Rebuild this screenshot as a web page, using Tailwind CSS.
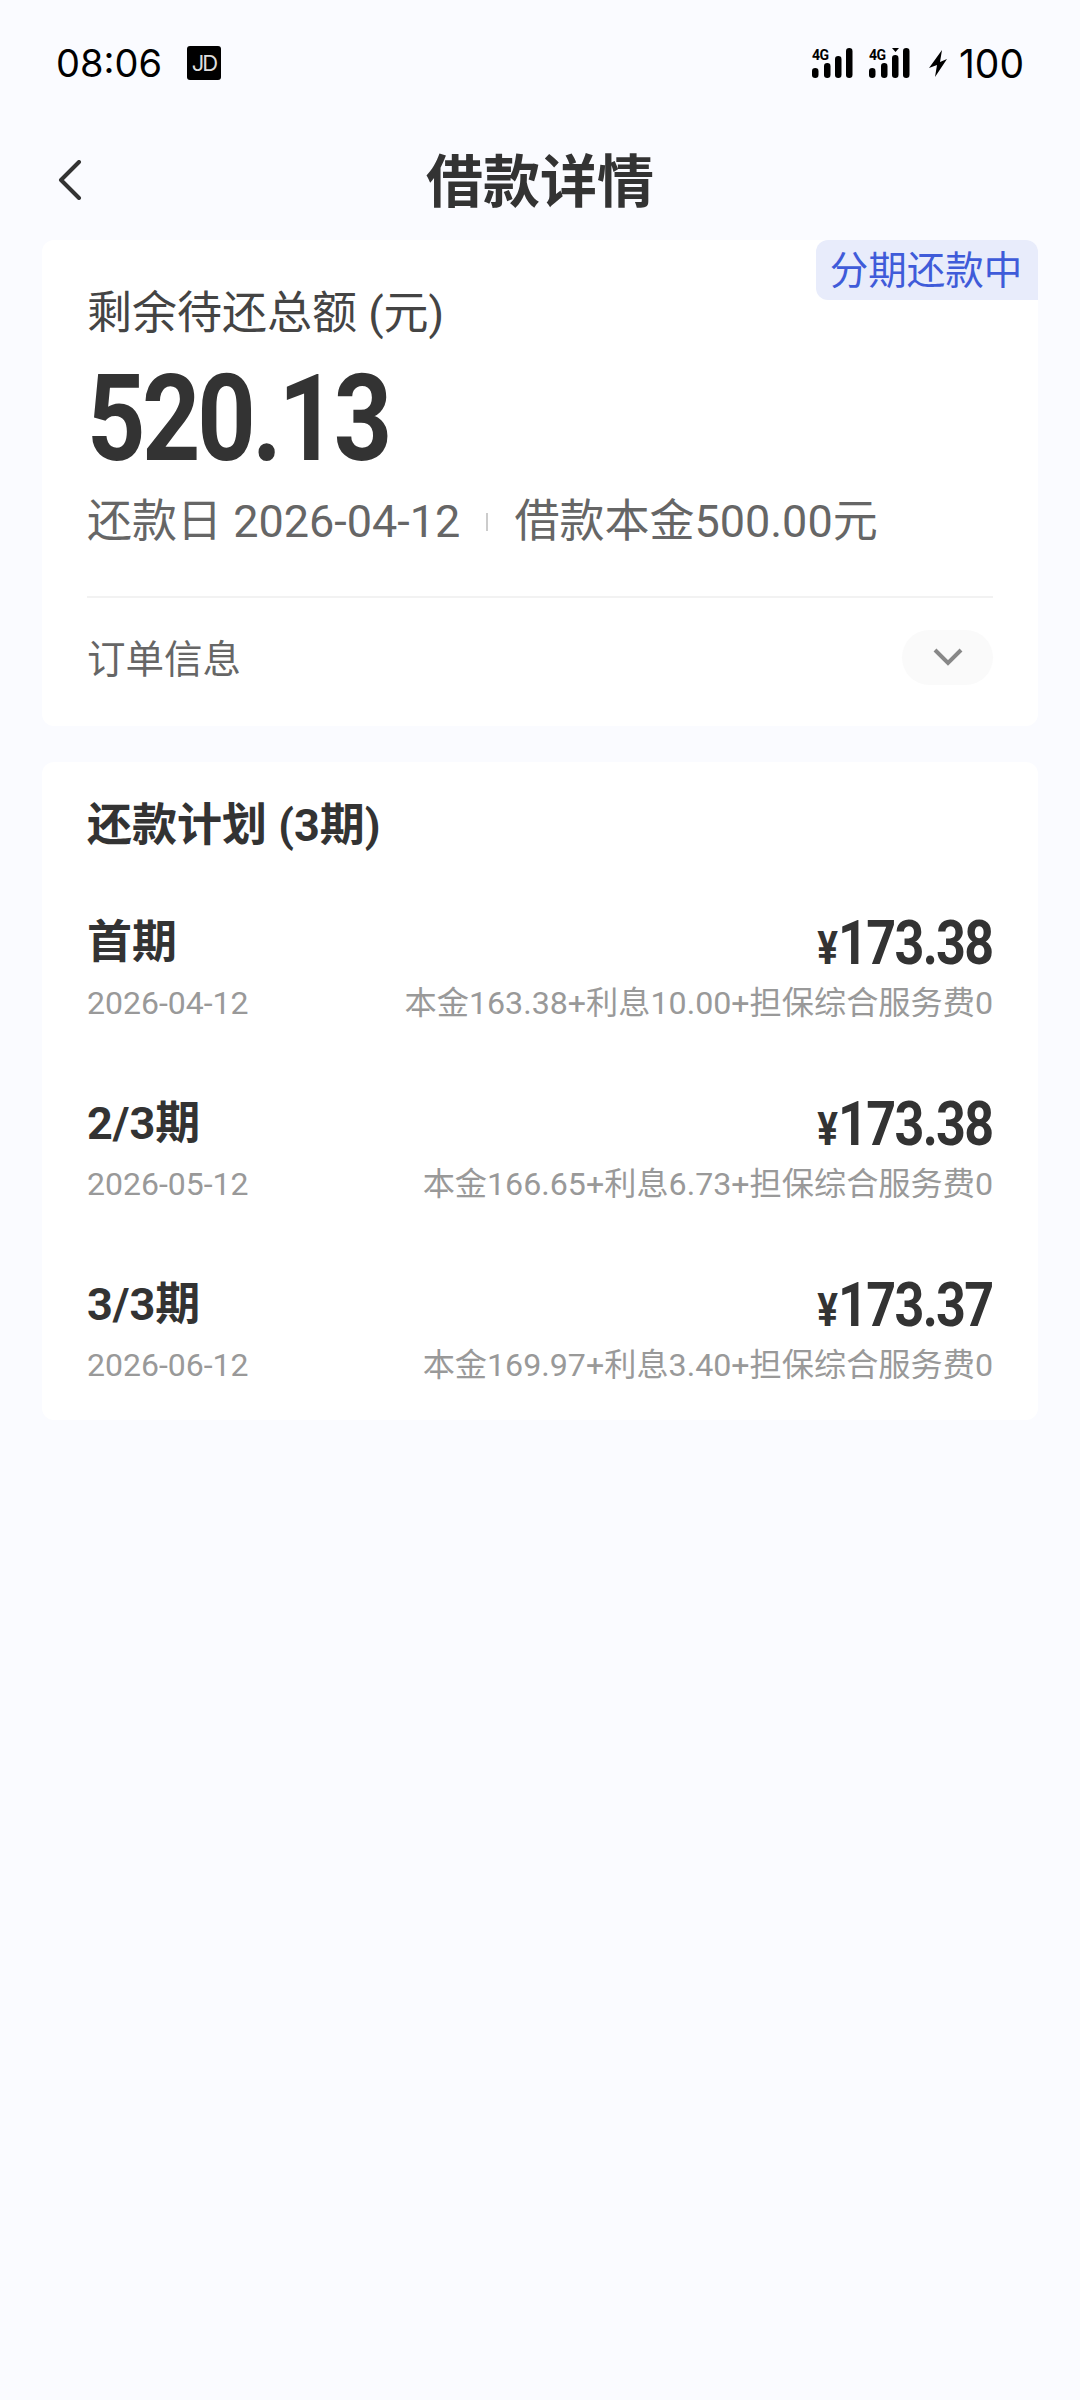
<!DOCTYPE html>
<html lang="zh-CN">
<head>
  <meta charset="UTF-8" />
  <meta name="viewport" content="width=device-width, initial-scale=1.0"/>
  <title>借款详情</title>
  <script src="https://cdn.jsdelivr.net/npm/@tailwindcss/browser@4"></script>
</head>
<body class="bg-[#fafbff] w-[1080px] h-[2400px] overflow-hidden text-[#333] font-['Roboto','Noto_Sans_CJK_SC',sans-serif]">
  <!-- status bar -->
  <div class="h-[126px] pl-[56px] pr-[56px] flex items-center justify-between text-black">
    <div class="flex items-center gap-[25px]">
      <span class="text-[38px] leading-none font-['Inter',sans-serif]">08:06</span>
      <span class="w-[34px] h-[34px] bg-black rounded-[3px] flex items-center justify-center text-[#ddd] text-[22px] leading-none tracking-[-2px] font-['Inter',sans-serif]">JD</span>
    </div>
    <div class="flex items-center">
      <div class="relative w-[41px] h-[31px]">
        <span class="absolute left-0 top-0 text-[14px] leading-[14px] font-bold tracking-[-0.5px]">4G</span>
        <svg width="41" height="31" viewBox="0 0 41 31" class="fill-black">
          <rect x="0" y="20" width="6.5" height="10" rx="3.2"/>
          <rect x="12" y="15" width="6.5" height="15" rx="3.2"/>
          <rect x="23" y="8" width="6.5" height="22" rx="3.2"/>
          <rect x="34" y="0" width="6.5" height="30" rx="3.2"/>
        </svg>
      </div>
      <div class="relative w-[41px] h-[31px] ml-[16px]">
        <span class="absolute left-0 top-0 text-[14px] leading-[14px] font-bold tracking-[-0.5px]">4G</span>
        <svg width="41" height="31" viewBox="0 0 41 31" class="fill-black">
          <rect x="0" y="20" width="6.5" height="10" rx="3.2"/>
          <rect x="12" y="15" width="6.5" height="15" rx="3.2"/>
          <rect x="23" y="7" width="6.5" height="23" rx="3.2"/>
          <path d="M23 0h7l-3.5 4z"/>
          <rect x="34" y="0" width="6.5" height="30" rx="3.2"/>
        </svg>
      </div>
      <svg width="18" height="27" viewBox="0 0 18 27" class="fill-black ml-[19px]">
        <path d="M13 0 0 18l8-3-2 12L18 9l-7 3z"/>
      </svg>
      <span class="ml-[12px] text-[39px] leading-none font-['Inter',sans-serif]">100</span>
    </div>
  </div>

  <!-- nav -->
  <div class="relative h-[114px] flex items-center justify-center">
    <svg width="24" height="40" viewBox="0 0 24 40" fill="none" class="absolute left-[58px] top-[34px] stroke-[#333]">
      <path d="M21 2 3 20l18 18" stroke-width="4" stroke-linecap="round" stroke-linejoin="round"/>
    </svg>
    <h1 class="text-[57px] leading-none font-bold -translate-y-[1px]">借款详情</h1>
  </div>

  <!-- summary card -->
  <div class="relative mx-[42px] h-[486px] bg-white rounded-[12px] px-[45px] pt-[44px]">
    <span class="absolute right-0 top-0 w-[222px] h-[60px] pt-[3px] pr-[2px] bg-[#e8ecfb] rounded-tl-[12px] rounded-tr-[12px] rounded-bl-[12px] flex items-center justify-center text-[38.5px] leading-none text-[#3f5bd9]">分期还款中</span>
    <p class="text-[45px] leading-[60px] text-[#444]">剩余待还总额 (元)</p>
    <p class="mt-[15px] text-[120px] leading-[120px] font-bold tracking-[-4px] origin-left scale-x-[0.85]">520.13</p>
    <div class="mt-[13px] flex items-center text-[45px] leading-[60px] text-[#666]">
      <span>还款日 2026-04-12</span>
      <span class="ml-[26px] w-[2px] h-[18px] bg-[#ccc]"></span>
      <span class="ml-[26px]">借款本金500.00元</span>
    </div>
    <div class="mt-[44px] border-t-2 border-[#f2f2f2] flex items-center justify-between pt-[32px]">
      <span class="text-[38.5px] leading-[60px] text-[#666]">订单信息</span>
      <span class="-translate-y-[3px] w-[91px] h-[55px] rounded-full bg-[#fafafa] flex items-center justify-center">
        <svg width="30" height="18" viewBox="0 0 30 18" fill="none" class="stroke-[#888]">
          <path d="M2 2l13 13L28 2" stroke-width="4"/>
        </svg>
      </span>
    </div>
  </div>

  <!-- repayment plan -->
  <div class="mx-[42px] mt-[36px] h-[658px] bg-white rounded-[12px] px-[45px] pt-[34px]">
    <h2 class="text-[45px] leading-[60px] font-bold">还款计划 (3期)</h2>
    <div class="mt-[57px] flex flex-col gap-[61px]">
      <div>
        <div class="flex items-center justify-between h-[60px]">
          <span class="text-[45px] font-bold">首期</span>
          <span class="text-[62px] leading-none font-bold tracking-[-2px] origin-right scale-x-[0.84]"><span class="text-[46px] mr-[2px]">¥</span>173.38</span>
        </div>
        <div class="flex items-center justify-between h-[60px] text-[32px] text-[#999]">
          <span>2026-04-12</span>
          <span class="text-[32.2px]">本金163.38+利息10.00+担保综合服务费0</span>
        </div>
      </div>
      <div>
        <div class="flex items-center justify-between h-[60px]">
          <span class="text-[45px] font-bold">2/3期</span>
          <span class="text-[62px] leading-none font-bold tracking-[-2px] origin-right scale-x-[0.84]"><span class="text-[46px] mr-[2px]">¥</span>173.38</span>
        </div>
        <div class="flex items-center justify-between h-[60px] text-[32px] text-[#999]">
          <span>2026-05-12</span>
          <span class="text-[32.2px]">本金166.65+利息6.73+担保综合服务费0</span>
        </div>
      </div>
      <div>
        <div class="flex items-center justify-between h-[60px]">
          <span class="text-[45px] font-bold">3/3期</span>
          <span class="text-[62px] leading-none font-bold tracking-[-2px] origin-right scale-x-[0.84]"><span class="text-[46px] mr-[2px]">¥</span>173.37</span>
        </div>
        <div class="flex items-center justify-between h-[60px] text-[32px] text-[#999]">
          <span>2026-06-12</span>
          <span class="text-[32.2px]">本金169.97+利息3.40+担保综合服务费0</span>
        </div>
      </div>
    </div>
  </div>
</body>
</html>
